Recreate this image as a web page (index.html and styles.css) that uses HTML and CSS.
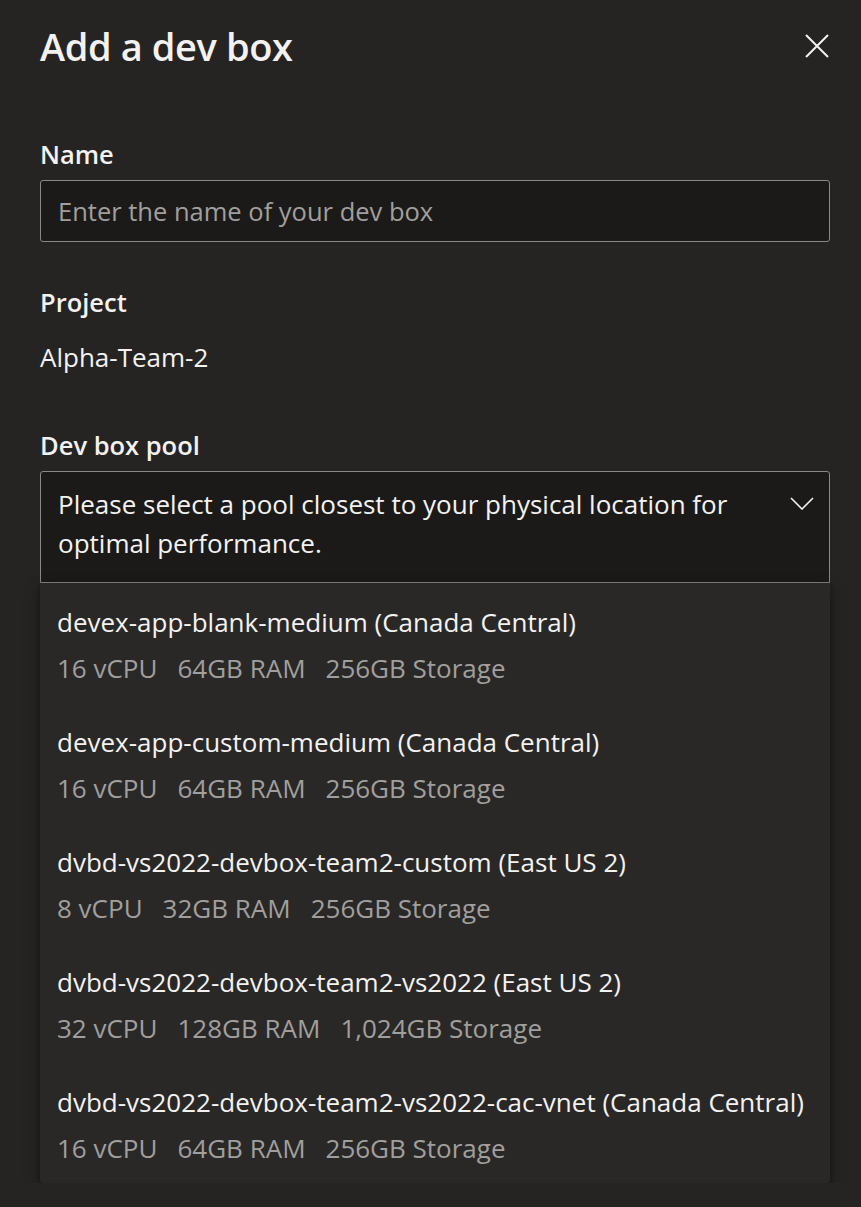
FILE: index.html
```html
<!DOCTYPE html>
<html lang="en">
<head>
<meta charset="utf-8">
<title>Add a dev box</title>
<link rel="stylesheet" href="styles.css">
</head>
<body>
<div class="panel">
  <header class="header">
    <h1 class="title">Add a dev box</h1>
    <button class="close" aria-label="Close">
      <svg width="24" height="24" viewBox="0 0 24 24"><path d="M1 1 L23 23 M23 1 L1 23" stroke="#f3f2f1" stroke-width="2" fill="none"/></svg>
    </button>
  </header>

  <div class="field field-name">
    <div class="label">Name</div>
    <div class="input"><span class="placeholder">Enter the name of your dev box</span></div>
  </div>

  <div class="field field-project">
    <div class="label">Project</div>
    <div class="value">Alpha-Team-2</div>
  </div>

  <div class="field field-pool">
    <div class="label">Dev box pool</div>
    <div class="dropdown">
      <span class="dropdown-text">Please select a pool closest to your physical location for optimal performance.</span>
      <svg class="chevron" width="24" height="13" viewBox="0 0 24 13"><path d="M1 1 L12 12 L23 1" stroke="#f3f2f1" stroke-width="1.6" fill="none"/></svg>
    </div>
    <ul class="list">
      <li class="option">
        <div class="option-name">devex-app-blank-medium (Canada Central)</div>
        <div class="specs"><span>16 vCPU</span><span>64GB RAM</span><span>256GB Storage</span></div>
      </li>
      <li class="option">
        <div class="option-name">devex-app-custom-medium (Canada Central)</div>
        <div class="specs"><span>16 vCPU</span><span>64GB RAM</span><span>256GB Storage</span></div>
      </li>
      <li class="option">
        <div class="option-name">dvbd-vs2022-devbox-team2-custom (East US 2)</div>
        <div class="specs"><span>8 vCPU</span><span>32GB RAM</span><span>256GB Storage</span></div>
      </li>
      <li class="option">
        <div class="option-name">dvbd-vs2022-devbox-team2-vs2022 (East US 2)</div>
        <div class="specs"><span>32 vCPU</span><span>128GB RAM</span><span>1,024GB Storage</span></div>
      </li>
      <li class="option">
        <div class="option-name">dvbd-vs2022-devbox-team2-vs2022-cac-vnet (Canada Central)</div>
        <div class="specs"><span>16 vCPU</span><span>64GB RAM</span><span>256GB Storage</span></div>
      </li>
    </ul>
  </div>
</div>
</body>
</html>
```

FILE: styles.css
```css
* { box-sizing: border-box; }
html, body {
  margin: 0;
  padding: 0;
  background: #252423;
  color: #f3f2f1;
  font-family: "Open Sans", "Noto Sans", "Liberation Sans", sans-serif;
}
.panel {
  padding: 26px 31px 0 40px;
}
.header {
  display: flex;
  justify-content: space-between;
  align-items: center;
  height: 40px;
}
.title {
  margin: 0;
  font-size: 38px;
  font-weight: 600;
  line-height: 40px;
  letter-spacing: -0.4px;
}
.close {
  background: none;
  border: 0;
  padding: 0;
  margin-right: 1px;
  width: 24px;
  height: 24px;
  display: flex;
}
.label {
  font-size: 25.5px;
  font-weight: 600;
  line-height: 32px;
}
.field-name { margin-top: 72px; }
.field-project { margin-top: 44px; }
.field-pool { margin-top: 56px; }
.input {
  margin-top: 10px;
  height: 62px;
  border: 1px solid #8a8886;
  border-radius: 3px;
  background: #1b1a19;
  display: flex;
  align-items: center;
  padding: 0 17px;
}
.placeholder {
  font-size: 25.5px;
  color: #a19f9d;
}
.value {
  margin-top: 23px;
  font-size: 26px;
  line-height: 32px;
}
.dropdown {
  margin-top: 10px;
  border: 1px solid #8a8886;
  border-radius: 3px 3px 0 0;
  background: #1b1a19;
  padding: 13px 15px 19px 17px;
  display: flex;
  align-items: flex-start;
  gap: 40px;
}
.dropdown-text {
  font-size: 26px;
  line-height: 39px;
  flex: 1;
}
.chevron {
  margin-top: 12px;
  flex: none;
}
.list {
  list-style: none;
  margin: 0;
  padding: 0;
  background: #292827;
  border-radius: 0 0 3px 3px;
  box-shadow: 0 6px 16px rgba(0,0,0,0.35), 0 1px 4px rgba(0,0,0,0.25);
}
.option {
  height: 120px;
  padding: 23px 17px 0;
}
.option-name {
  font-size: 26px;
  line-height: 32px;
}
.specs {
  margin-top: 14px;
  display: flex;
  gap: 20px;
  font-size: 26px;
  line-height: 32px;
  color: #a19f9d;
}
```
